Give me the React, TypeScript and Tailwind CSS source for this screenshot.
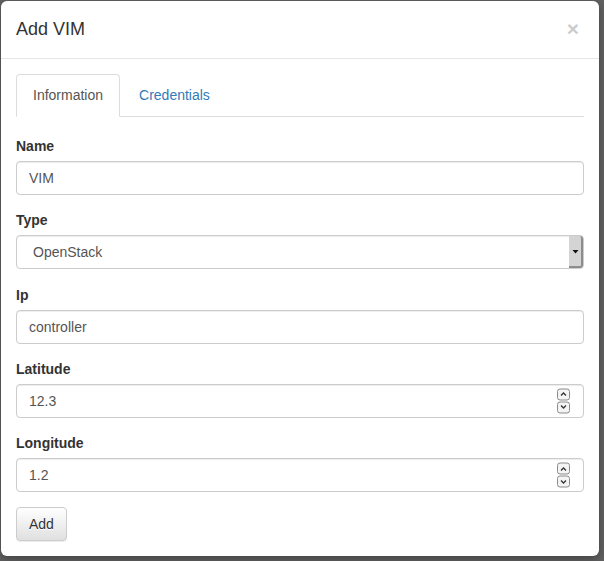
import React from "react";

const Spinner = () => (
  <div className="absolute right-[13px] top-1/2 -translate-y-1/2 flex flex-col gap-px">
    <div className="w-[13px] h-[12px] rounded-[3px] border border-[#8a8a8a] bg-[#f4f4f4] flex items-center justify-center">
      <svg width="7" height="5" viewBox="0 0 7 5">
        <path d="M1 4 L3.5 1.5 L6 4" fill="none" stroke="#333" strokeWidth="1.3" />
      </svg>
    </div>
    <div className="w-[13px] h-[12px] rounded-[3px] border border-[#8a8a8a] bg-[#f4f4f4] flex items-center justify-center">
      <svg width="7" height="5" viewBox="0 0 7 5">
        <path d="M1 1 L3.5 3.5 L6 1" fill="none" stroke="#333" strokeWidth="1.3" />
      </svg>
    </div>
  </div>
);

const Field = ({
  label,
  value,
  number,
}: {
  label: string;
  value: string;
  number?: boolean;
}) => (
  <div className="mb-[15.25px]">
    <label className="block mb-[5px] font-bold">{label}</label>
    <div className="relative h-[34px] px-[12px] flex items-center border border-[#ccc] rounded-[4px] text-[#555] shadow-[inset_0_1px_1px_rgba(0,0,0,0.075)]">
      {value}
      {number && <Spinner />}
    </div>
  </div>
);

export default function App() {
  return (
    <div className="h-[561px] w-[604px] bg-[#606060] pl-px pt-px font-['Liberation_Sans',Arial,sans-serif] text-[14px] leading-[20px] text-[#333]">
      <div className="w-[598px] bg-white rounded-[6px] shadow-[0_3px_9px_rgba(0,0,0,0.3)]">
        <div className="flex items-start justify-between px-[15px] pt-[15px] pb-[16px] border-b border-[#e5e5e5]">
          <h4 className="text-[18px] leading-[26px]">Add VIM</h4>
          <span className="mt-[2px] mr-[5px] text-[21px] leading-[21px] font-bold text-black opacity-20">
            ×
          </span>
        </div>

        <div className="p-[15px]">
          <div className="flex border-b border-[#ddd]">
            <div className="-mb-px mr-[2px] px-[16px] py-[10px] bg-white border border-[#ddd] border-b-white rounded-t-[4px] text-[#555]">
              Information
            </div>
            <div className="mr-[2px] px-[16px] py-[10px] border border-transparent text-[#337ab7]">
              Credentials
            </div>
          </div>

          <div className="mt-[19px]">
            <Field label="Name" value="VIM" />

            <div className="mb-[15.25px]">
              <label className="block mb-[5px] font-bold">Type</label>
              <div className="relative h-[34px] pl-[16px] flex items-center border border-[#ccc] rounded-[4px] text-[#555] shadow-[inset_0_1px_1px_rgba(0,0,0,0.075)]">
                OpenStack
                <div className="absolute right-0 top-0 bottom-0 w-[14px] bg-[#d4d4d4] border-r-2 border-b-2 border-[#8c8c8c] rounded-tr-[3px] rounded-br-[3px] flex items-center justify-center">
                  <svg width="7" height="5" viewBox="0 0 7 5">
                    <path d="M0.5 1 L6.5 1 L3.5 4.5 Z" fill="#111" />
                  </svg>
                </div>
              </div>
            </div>

            <Field label="Ip" value="controller" />
            <Field label="Latitude" value="12.3" number />
            <Field label="Longitude" value="1.2" number />

            <button className="h-[34px] px-[12px] border border-[#ccc] rounded-[4px] bg-gradient-to-b from-white to-[#e0e0e0] text-[#333] shadow-[inset_0_1px_0_rgba(255,255,255,0.15),0_1px_1px_rgba(0,0,0,0.075)] [text-shadow:0_1px_0_#fff]">
              Add
            </button>
          </div>
        </div>
      </div>
    </div>
  );
}
